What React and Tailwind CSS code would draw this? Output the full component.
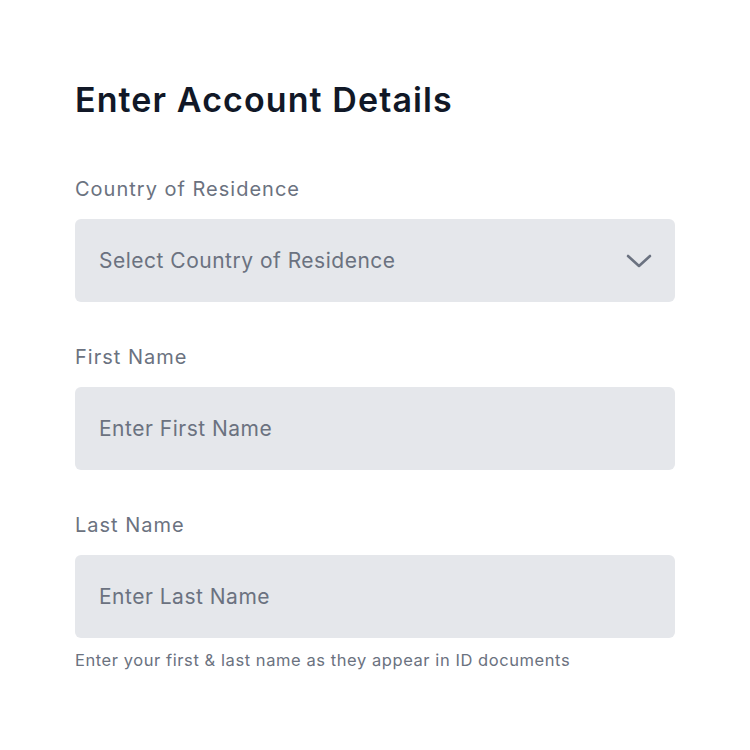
import React from "react";

const Field = ({ label, placeholder, select }) => {
  return (
    <div className="flex flex-col gap-4">
      <label className="text-[20px] leading-7 tracking-[1px] text-[#6b7280]">{label}</label>
      <div className="flex items-center justify-between h-[83px] rounded-md bg-[#e5e7eb] px-6">
        <span className="text-[21px] tracking-[0.5px] text-[#6b7280]">{placeholder}</span>
        {select && (
          <svg width="26" height="14" viewBox="0 0 26 14" fill="none" className="mr-[-1px]">
            <path d="M2 2l11 10 11-10" stroke="#6b7280" strokeWidth="2.6" strokeLinecap="round" strokeLinejoin="round" />
          </svg>
        )}
      </div>
    </div>
  );
};

const App = () => {
  return (
    <div className="w-[750px] h-[750px] bg-white px-[75px] pt-[80px] font-['Inter','Noto_Sans',sans-serif]">
      <h1 className="text-[34px] leading-10 font-semibold text-[#111827] tracking-[1.1px]">Enter Account Details</h1>
      <div className="flex flex-col gap-[41px] mt-[55px]">
        <Field label="Country of Residence" placeholder="Select Country of Residence" select />
        <Field label="First Name" placeholder="Enter First Name" />
        <div className="flex flex-col gap-[10px]">
          <Field label="Last Name" placeholder="Enter Last Name" />
          <p className="text-[16.5px] leading-6 tracking-[0.57px] text-[#6b7280]">Enter your first &amp; last name as they appear in ID documents</p>
        </div>
      </div>
    </div>
  );
};

export default App;
